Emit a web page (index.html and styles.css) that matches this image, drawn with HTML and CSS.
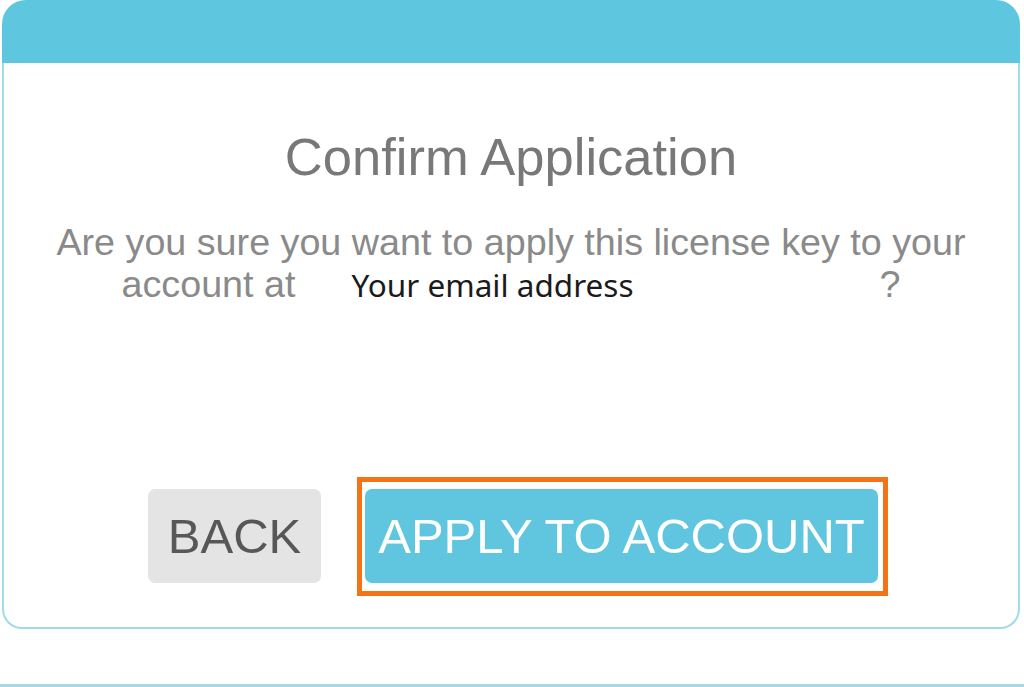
FILE: index.html
```html
<!DOCTYPE html>
<html lang="en">
<head>
<meta charset="utf-8">
<title>Confirm Application</title>
<link rel="stylesheet" href="styles.css">
</head>
<body>
  <div class="card">
    <div class="card-header"></div>
    <div class="card-body">
      <h1 class="title">Confirm Application</h1>
      <div class="message">
        <div class="line">Are you sure you want to apply this license key to your</div>
        <div class="line line-email">
          <span class="lead">account at</span>
          <span class="email">Your email address</span>
          <span class="qmark">?</span>
        </div>
      </div>
      <div class="actions">
        <button class="btn btn-back" type="button">BACK</button>
        <button class="btn btn-apply" type="button">APPLY TO ACCOUNT</button>
      </div>
    </div>
  </div>
  <div class="bottom-rule"></div>
</body>
</html>
```

FILE: styles.css
```css
html, body {
  margin: 0;
  padding: 0;
  background: #ffffff;
}

body {
  width: 1024px;
  height: 687px;
  overflow: hidden;
  font-family: "Liberation Sans", Arial, sans-serif;
}

.card {
  margin-left: 2px;
  width: 1018px;
  border-radius: 24px 24px 0 0;
  overflow: hidden;
}

.card-header {
  height: 63px;
  background: #5fc6df;
}

.card-body {
  box-sizing: border-box;
  height: 566px;
  border: 2px solid #a3dae8;
  border-top: none;
  border-radius: 0 0 20px 20px;
  display: flex;
  flex-direction: column;
  align-items: center;
  padding-top: 64px;
}

.title {
  margin: 0;
  font-weight: normal;
  font-size: 52.5px;
  line-height: 60px;
  color: #787878;
  text-align: center;
}

.message {
  margin-top: 34px;
  width: 960px;
  font-size: 37.7px;
  line-height: 42px;
  color: #8a8a8a;
  text-align: center;
}

.line {
  height: 42px;
  white-space: nowrap;
}

.line-email {
  display: flex;
  justify-content: center;
  align-items: baseline;
}

.email {
  margin-left: 56px;
  font-family: "Noto Sans", "Open Sans", sans-serif;
  font-size: 31.5px;
  color: #1b1b1b;
}

.qmark {
  margin-left: 246px;
}

.actions {
  margin-top: 184px;
  display: flex;
  gap: 44px;
  margin-left: 4px;
}

.btn {
  height: 94px;
  border: none;
  border-radius: 7px;
  font-family: "Liberation Sans", Arial, sans-serif;
  font-size: 49px;
  padding: 0;
  display: flex;
  align-items: center;
  justify-content: center;
}

.btn-back {
  width: 173px;
  background: #e4e4e4;
  color: #575757;
}

.btn-apply {
  position: relative;
  width: 513px;
  background: #60c6df;
  color: #ffffff;
}

.btn-apply::after {
  content: "";
  position: absolute;
  top: -12px;
  left: -8px;
  right: -10px;
  bottom: -13px;
  border: 5px solid #f47317;
  pointer-events: none;
}

.bottom-rule {
  margin-top: 55px;
  height: 3px;
  background: #a9d8e4;
}
```
